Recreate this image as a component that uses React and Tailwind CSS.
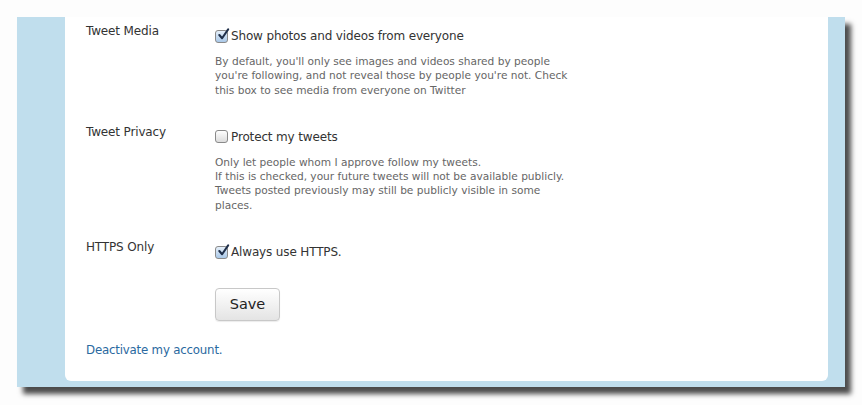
import React from 'react';

function Checkbox({ checked }) {
  return (
    <span
      className={`relative inline-block w-[13px] h-[13px] shrink-0 rounded-[3px] border border-[#8a8a8a] bg-gradient-to-b ${
        checked ? 'from-[#e6f0fa] to-[#a9c8e8]' : 'from-[#ffffff] to-[#dcdcdc]'
      }`}
    >
      {checked && (
        <svg
          viewBox="0 0 14 14"
          className="absolute left-[1px] top-[-3px] w-[13px] h-[13px]"
        >
          <path
            d="M2.5 7.5 L5.5 11 L12 1.5"
            fill="none"
            stroke="#1f2f4a"
            strokeWidth="2.2"
            strokeLinecap="round"
            strokeLinejoin="round"
          />
        </svg>
      )}
    </span>
  );
}

function SettingRow({ label, option, checked, children, className }) {
  return (
    <div className={`flex ${className || ''}`}>
      <div className="w-[129px] shrink-0 pt-[2px] text-[12px] tracking-[-0.15px] leading-[16px] text-[#333]">
        {label}
      </div>
      <div>
        <label className="flex items-center gap-[3px] pt-[7px] text-[12px] tracking-[-0.15px] leading-[16px] text-[#333]">
          <Checkbox checked={checked} />
          <span>{option}</span>
        </label>
        {children && (
          <p className="mt-[10px] w-[362px] text-[10.6px] leading-[14.3px] text-[#666]">
            {children}
          </p>
        )}
      </div>
    </div>
  );
}

export default function App() {
  return (
    <div
      className="w-[862px] h-[405px] bg-[#fdfdfd] pl-[17px] pt-[17px] overflow-hidden"
      style={{ fontFamily: '"DejaVu Sans", "Lucida Grande", sans-serif' }}
    >
      <div className="w-[828px] h-[370px] bg-[#c0deed] pl-[48px] pr-[17px] shadow-[6px_7px_5px_rgba(0,0,0,0.7)]">
        <div className="h-[364px] bg-white rounded-b-[6px] pl-[21px] pt-[4px]">
          <SettingRow label="Tweet Media" option="Show photos and videos from everyone" checked>
            By default, you'll only see images and videos shared by people
            you're following, and not reveal those by people you're not. Check
            this box to see media from everyone on Twitter
          </SettingRow>

          <SettingRow
            className="mt-[25px]"
            label="Tweet Privacy"
            option="Protect my tweets"
            checked={false}
          >
            Only let people whom I approve follow my tweets.
            <br />
            If this is checked, your future tweets will not be available publicly.
            Tweets posted previously may still be publicly visible in some
            places.
          </SettingRow>

          <SettingRow
            className="mt-[25px]"
            label="HTTPS Only"
            option="Always use HTTPS."
            checked
          />

          <div className="pl-[129px] mt-[28px]">
            <button
              type="button"
              className="w-[65px] h-[33px] rounded-[4px] border border-[#c8c8c8] bg-gradient-to-b from-[#ffffff] to-[#e4e4e4] text-[14.5px] text-[#222] shadow-[0_1px_1px_rgba(0,0,0,0.08)]"
            >
              Save
            </button>
          </div>

          <a href="#" className="block mt-[21px] text-[11.8px] tracking-[-0.2px] leading-[16px] text-[#2a69a0]">
            Deactivate my account.
          </a>
        </div>
      </div>
    </div>
  );
}
